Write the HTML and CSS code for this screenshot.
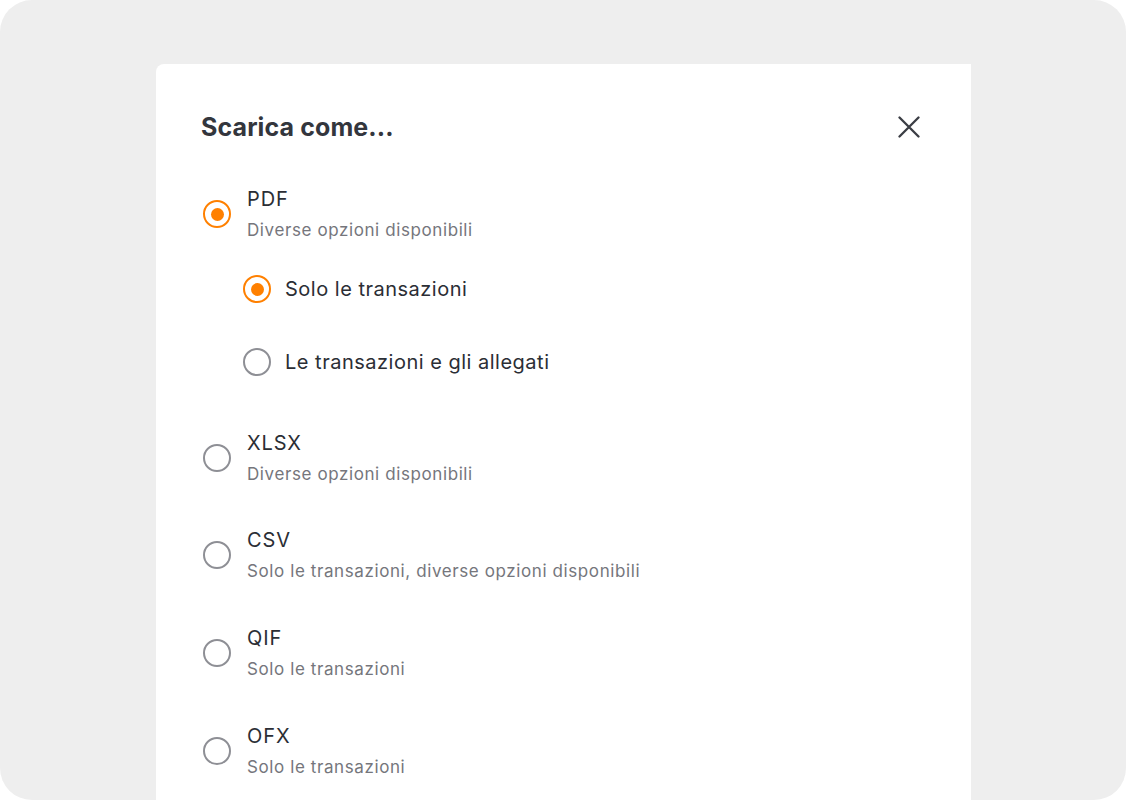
FILE: index.html
```html
<!DOCTYPE html>
<html lang="it">
<head>
<meta charset="utf-8">
<title>Scarica come...</title>
<link rel="stylesheet" href="styles.css">
</head>
<body>
<div class="frame">
  <div class="card">
    <div class="header">
      <h1 class="title">Scarica come...</h1>
      <button class="close" aria-label="Chiudi">
        <svg width="22" height="22" viewBox="0 0 22 22"><path d="M1.5 1.5 L20.5 20.5 M20.5 1.5 L1.5 20.5" stroke="#3a3d44" stroke-width="2.3" stroke-linecap="round" fill="none"/></svg>
      </button>
    </div>
    <div class="options">
      <div class="option">
        <span class="radio checked"></span>
        <div class="label">
          <div class="name">PDF</div>
          <div class="desc">Diverse opzioni disponibili</div>
        </div>
      </div>
      <div class="suboptions">
        <div class="suboption">
          <span class="radio checked"></span>
          <span class="subname">Solo le transazioni</span>
        </div>
        <div class="suboption">
          <span class="radio"></span>
          <span class="subname">Le transazioni e gli allegati</span>
        </div>
      </div>
      <div class="option">
        <span class="radio"></span>
        <div class="label">
          <div class="name">XLSX</div>
          <div class="desc">Diverse opzioni disponibili</div>
        </div>
      </div>
      <div class="option">
        <span class="radio"></span>
        <div class="label">
          <div class="name">CSV</div>
          <div class="desc">Solo le transazioni, diverse opzioni disponibili</div>
        </div>
      </div>
      <div class="option">
        <span class="radio"></span>
        <div class="label">
          <div class="name">QIF</div>
          <div class="desc">Solo le transazioni</div>
        </div>
      </div>
      <div class="option">
        <span class="radio"></span>
        <div class="label">
          <div class="name">OFX</div>
          <div class="desc">Solo le transazioni</div>
        </div>
      </div>
    </div>
  </div>
</div>
</body>
</html>
```
FILE: styles.css
```css
html, body {
  margin: 0;
  padding: 0;
  background: #ffffff;
}
body {
  font-family: "Inter", "Lato", "Liberation Sans", sans-serif;
  color: #2b2e35;
}
.frame {
  box-sizing: border-box;
  width: 1126px;
  height: 800px;
  background: #eeeeee;
  border-radius: 32px;
  padding: 64px 155px 0 156px;
  overflow: hidden;
}
.card {
  box-sizing: border-box;
  height: 100%;
  background: #ffffff;
  border-top-left-radius: 8px;
  padding: 47px 51px 0 45px;
}
.header {
  display: flex;
  justify-content: space-between;
  align-items: center;
  height: 32px;
}
.title {
  margin: 0;
  font-size: 25px;
  line-height: 32px;
  font-weight: 700;
  color: #33363d;
  letter-spacing: 0.1px;
}
.close {
  border: 0;
  background: none;
  padding: 0;
  width: 22px;
  height: 22px;
  display: flex;
  cursor: pointer;
}
.options {
  margin-top: 40px;
  padding-left: 2px;
  display: flex;
  flex-direction: column;
}
.option {
  display: flex;
  align-items: center;
  gap: 16px;
  height: 62px;
  margin-bottom: 35.7px;
}
.radio {
  box-sizing: border-box;
  flex: none;
  width: 28px;
  height: 28px;
  border-radius: 50%;
  border: 2.6px solid #8e8f95;
  display: flex;
  align-items: center;
  justify-content: center;
}
.radio.checked {
  border-color: #ff8000;
}
.radio.checked::after {
  content: "";
  width: 13px;
  height: 13px;
  border-radius: 50%;
  background: #ff8000;
}
.label {
  display: flex;
  flex-direction: column;
}
.name {
  font-size: 20px;
  line-height: 28px;
  color: #2b2e35;
  letter-spacing: 0.9px;
}
.desc {
  font-size: 17px;
  line-height: 26px;
  color: #75767c;
  margin-top: 4px;
  letter-spacing: 0.6px;
}
.suboptions {
  display: flex;
  flex-direction: column;
  padding-left: 40px;
  margin-top: -28px;
  margin-bottom: 28px;
}
.suboption {
  display: flex;
  align-items: center;
  gap: 14px;
  height: 73px;
}
.subname {
  font-size: 20px;
  color: #2b2e35;
  letter-spacing: 0.5px;
}
```
